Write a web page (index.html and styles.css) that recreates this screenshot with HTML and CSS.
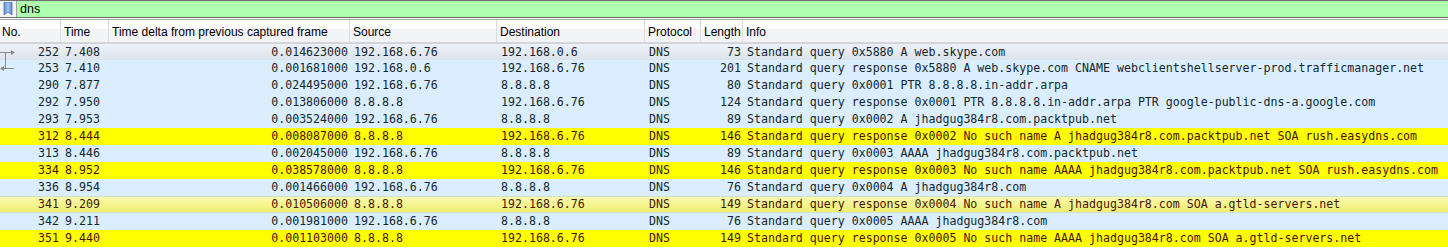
FILE: index.html
```html
<!DOCTYPE html>
<html lang="en">
<head>
    <meta charset="UTF-8">
    <title>dns - packet list</title>
    <link rel="stylesheet" href="styles.css">
</head>
<body>

    <div class="filter-bar">
        <div class="filter-icon">
            <svg width="10" height="14" viewBox="0 0 10 14">
                <defs>
                    <linearGradient id="bm" x1="0" x2="1" y1="0" y2="0">
                        <stop offset="0" stop-color="#5a8bd0"/>
                        <stop offset="0.5" stop-color="#a3c5f0"/>
                        <stop offset="1" stop-color="#5583c6"/>
                    </linearGradient>
                </defs>
                <path d="M1 0 H9 V13 L5 10 L1 13 Z" fill="url(#bm)" stroke="#4a78b8" stroke-width="0.8"/>
            </svg>
        </div>
        <div class="filter-text">dns</div>
    </div>

    <div class="packet-list">
        <div class="row header">
            <div class="cell">No.</div>
            <div class="cell">Time</div>
            <div class="cell">Time delta from previous captured frame</div>
            <div class="cell">Source</div>
            <div class="cell">Destination</div>
            <div class="cell">Protocol</div>
            <div class="cell">Length</div>
            <div class="cell">Info</div>
        </div>

        <div class="row selected">
            <div class="cell num">
                <svg class="rel" width="18" height="17" viewBox="0 0 18 17">
                    <path d="M5.5 8.5 V17 M0 8.5 H12" stroke="#8a8a8a" stroke-width="1" fill="none"/>
                    <path d="M11 6 L15 8.5 L11 11 Z" fill="#8a8a8a"/>
                </svg>
                252
            </div>
            <div class="cell">7.408</div>
            <div class="cell num">0.014623000</div>
            <div class="cell">192.168.6.76</div>
            <div class="cell">192.168.0.6</div>
            <div class="cell">DNS</div>
            <div class="cell num">73</div>
            <div class="cell">Standard query 0x5880 A web.skype.com</div>
        </div>

        <div class="row blue">
            <div class="cell num">
                <svg class="rel" width="18" height="17" viewBox="0 0 18 17">
                    <path d="M5.5 0 V8.5 M3 8.5 H14" stroke="#8a8a8a" stroke-width="1" fill="none"/>
                    <path d="M4 6 L0 8.5 L4 11 Z" fill="#8a8a8a"/>
                </svg>
                253
            </div>
            <div class="cell">7.410</div>
            <div class="cell num">0.001681000</div>
            <div class="cell">192.168.0.6</div>
            <div class="cell">192.168.6.76</div>
            <div class="cell">DNS</div>
            <div class="cell num">201</div>
            <div class="cell">Standard query response 0x5880 A web.skype.com CNAME webclientshellserver-prod.trafficmanager.net</div>
        </div>

        <div class="row blue">
            <div class="cell num">290</div>
            <div class="cell">7.877</div>
            <div class="cell num">0.024495000</div>
            <div class="cell">192.168.6.76</div>
            <div class="cell">8.8.8.8</div>
            <div class="cell">DNS</div>
            <div class="cell num">80</div>
            <div class="cell">Standard query 0x0001 PTR 8.8.8.8.in-addr.arpa</div>
        </div>

        <div class="row blue">
            <div class="cell num">292</div>
            <div class="cell">7.950</div>
            <div class="cell num">0.013806000</div>
            <div class="cell">8.8.8.8</div>
            <div class="cell">192.168.6.76</div>
            <div class="cell">DNS</div>
            <div class="cell num">124</div>
            <div class="cell">Standard query response 0x0001 PTR 8.8.8.8.in-addr.arpa PTR google-public-dns-a.google.com</div>
        </div>

        <div class="row blue">
            <div class="cell num">293</div>
            <div class="cell">7.953</div>
            <div class="cell num">0.003524000</div>
            <div class="cell">192.168.6.76</div>
            <div class="cell">8.8.8.8</div>
            <div class="cell">DNS</div>
            <div class="cell num">89</div>
            <div class="cell">Standard query 0x0002 A jhadgug384r8.com.packtpub.net</div>
        </div>

        <div class="row yellow">
            <div class="cell num">312</div>
            <div class="cell">8.444</div>
            <div class="cell num">0.008087000</div>
            <div class="cell">8.8.8.8</div>
            <div class="cell">192.168.6.76</div>
            <div class="cell">DNS</div>
            <div class="cell num">146</div>
            <div class="cell">Standard query response 0x0002 No such name A jhadgug384r8.com.packtpub.net SOA rush.easydns.com</div>
        </div>

        <div class="row blue">
            <div class="cell num">313</div>
            <div class="cell">8.446</div>
            <div class="cell num">0.002045000</div>
            <div class="cell">192.168.6.76</div>
            <div class="cell">8.8.8.8</div>
            <div class="cell">DNS</div>
            <div class="cell num">89</div>
            <div class="cell">Standard query 0x0003 AAAA jhadgug384r8.com.packtpub.net</div>
        </div>

        <div class="row yellow">
            <div class="cell num">334</div>
            <div class="cell">8.952</div>
            <div class="cell num">0.038578000</div>
            <div class="cell">8.8.8.8</div>
            <div class="cell">192.168.6.76</div>
            <div class="cell">DNS</div>
            <div class="cell num">146</div>
            <div class="cell">Standard query response 0x0003 No such name AAAA jhadgug384r8.com.packtpub.net SOA rush.easydns.com</div>
        </div>

        <div class="row blue">
            <div class="cell num">336</div>
            <div class="cell">8.954</div>
            <div class="cell num">0.001466000</div>
            <div class="cell">192.168.6.76</div>
            <div class="cell">8.8.8.8</div>
            <div class="cell">DNS</div>
            <div class="cell num">76</div>
            <div class="cell">Standard query 0x0004 A jhadgug384r8.com</div>
        </div>

        <div class="row yellow hover">
            <div class="cell num">341</div>
            <div class="cell">9.209</div>
            <div class="cell num">0.010506000</div>
            <div class="cell">8.8.8.8</div>
            <div class="cell">192.168.6.76</div>
            <div class="cell">DNS</div>
            <div class="cell num">149</div>
            <div class="cell">Standard query response 0x0004 No such name A jhadgug384r8.com SOA a.gtld-servers.net</div>
        </div>

        <div class="row blue">
            <div class="cell num">342</div>
            <div class="cell">9.211</div>
            <div class="cell num">0.001981000</div>
            <div class="cell">192.168.6.76</div>
            <div class="cell">8.8.8.8</div>
            <div class="cell">DNS</div>
            <div class="cell num">76</div>
            <div class="cell">Standard query 0x0005 AAAA jhadgug384r8.com</div>
        </div>

        <div class="row yellow">
            <div class="cell num">351</div>
            <div class="cell">9.440</div>
            <div class="cell num">0.001103000</div>
            <div class="cell">8.8.8.8</div>
            <div class="cell">192.168.6.76</div>
            <div class="cell">DNS</div>
            <div class="cell num">149</div>
            <div class="cell">Standard query response 0x0005 No such name AAAA jhadgug384r8.com SOA a.gtld-servers.net</div>
        </div>
    </div>

</body>
</html>
```

FILE: styles.css
```css
body {
    margin: 0;
    padding: 0;
    background-color: #fff;
    font-family: 'Liberation Sans', Arial, sans-serif;
    overflow: hidden;
}

.filter-bar {
    display: flex;
    height: 16px;
    border-top: 1px solid #707070;
    border-bottom: 1px solid #707070;
    background-color: #afffaf;
}

.filter-icon {
    width: 16px;
    display: flex;
    align-items: center;
    justify-content: center;
    background-color: #f4f4f4;
    border-right: 1px solid #a0a0a0;
}

.filter-text {
    padding-left: 3px;
    font-size: 12.5px;
    line-height: 16px;
    color: #000;
}

.packet-list {
    margin-top: 1px;
    border-top: 1px solid #a9a9a9;
}

.row {
    display: grid;
    grid-template-columns: 61px 48px 241px 147px 148px 56px 42px 1fr;
    height: 17px;
    font-family: 'DejaVu Sans Mono', monospace;
    font-size: 11.6px;
    line-height: 17px;
    color: #12272e;
    white-space: nowrap;
}

.cell {
    position: relative;
    padding: 0 3px 0 4px;
    overflow: hidden;
}

.cell.num {
    text-align: right;
    padding: 0 2px 0 3px;
}

.header {
    height: 22px;
    font-family: 'Liberation Sans', Arial, sans-serif;
    font-size: 12px;
    line-height: 20px;
    color: #000;
    background: linear-gradient(#fff 0, #fff 38%, #f3f4f6 42%, #f3f4f6 100%);
    border-bottom: 1px solid #d5d5d5;
}

.header .cell {
    padding: 2px 2px 0 3px;
    border-right: 1px solid #dcdcdc;
}

.header .cell:first-child {
    padding-left: 2px;
}

.header .cell:last-child {
    border-right: none;
}

.blue {
    background-color: #daeeff;
}

.yellow {
    background-color: #ffff00;
    color: #4a1500;
}

.selected {
    background: linear-gradient(#eef1f7, #dde3ec);
    border-top: 1px solid #d0d5dd;
    height: 16px;
    line-height: 16px;
}

.hover {
    background: linear-gradient(#fbfbb0, #efef70);
    border-top: 1px solid #cfe2c4;
    border-bottom: 1px solid #cfe2c4;
    height: 15px;
    line-height: 15px;
}

.rel {
    position: absolute;
    left: 0;
    top: 0;
}
```
